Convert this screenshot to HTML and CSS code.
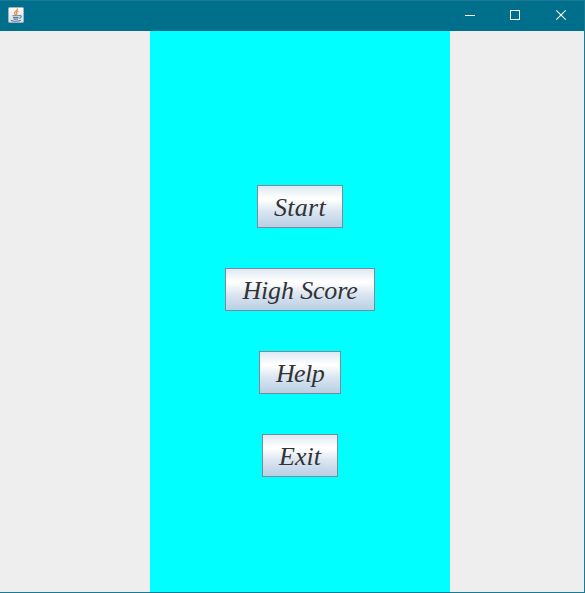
FILE: index.html
```html
<!DOCTYPE html>
<html lang="en">
<head>
<meta charset="utf-8">
<title>Menu</title>
<link rel="stylesheet" href="styles.css">
</head>
<body>
<div class="window">
  <header class="titlebar">
    <svg class="app-icon" width="16" height="16" viewBox="0 0 16 16">
      <defs><linearGradient id="tile" x2="0" y2="1"><stop stop-color="#fcfcfc"/><stop offset="1" stop-color="#d5dfe5"/></linearGradient></defs>
      <rect x=".5" y=".5" width="15" height="15" rx="1" fill="url(#tile)" stroke="#9eb4bd"/>
      <path d="M9.5 1.5C10 4 6 4.300 6.500 6.200C6.700 7 7.500 7.300 7.400 8M10.500 4.200C8.300 5 8 5.600 8.800 6.500C9.300 7.100 8.700 7.500 8.400 7.900" fill="none" stroke="#ed8a32" stroke-width="1.200"/>
      <path d="M4.500 8.700H11M5 10.600H10.500M5.500 12.200H10M11 8.700C14.300 7.800 13.700 10.800 11.300 11.400M3 13.500C5 14.500 10.500 14.500 12.800 13.300" fill="none" stroke="#557d9d" stroke-width="1.100"/>
    </svg>
    <div class="controls">
      <svg width="45" height="30" viewBox="0 0 45 30"><path d="M15 15.500H25" stroke="#fff"/></svg>
      <svg width="45" height="30" viewBox="0 0 45 30"><rect x="15.500" y="10.500" width="9" height="9" fill="none" stroke="#fff"/></svg>
      <svg width="45" height="30" viewBox="0 0 45 30"><path d="M16.300 10.300L25.700 19.700M25.700 10.300L16.300 19.700" stroke="#fff" stroke-width="1.100"/></svg>
    </div>
  </header>
  <main class="content">
    <nav class="menu">
      <button class="item start">Start</button>
      <button class="item score">High Score</button>
      <button class="item help">Help</button>
      <button class="item exit">Exit</button>
    </nav>
  </main>
</div>
</body>
</html>
```
FILE: styles.css
```css
* { box-sizing: border-box; }
body { margin: 0; overflow: hidden; }
.window {
  width: 585px;
  height: 593px;
  display: flex;
  flex-direction: column;
  background: #eee;
  border-right: 1px solid #1b7a93;
  border-bottom: 1px solid #1b7a93;
}
.titlebar {
  height: 31px;
  flex: none;
  display: flex;
  justify-content: space-between;
  align-items: flex-start;
  background: #006f8b;
  border-top: 1px solid #1b7a93;
}
.app-icon { margin: 6px 0 0 8px; }
.controls { display: flex; margin: -1px -1px 0 0; }
.controls svg { display: block; }
.content {
  flex: 1;
  padding-left: 150px;
}
.menu {
  width: 300px;
  height: 100%;
  padding-top: 154px;
  display: flex;
  flex-direction: column;
  align-items: center;
  gap: 40px;
  background: #0ff;
}
.item {
  height: 43px;
  padding: 2px 0 0;
  border: 1px solid #7a8a99;
  border-radius: 0;
  background: linear-gradient(#dde8f3 0%, #fff 30%, #fff 33%, #dce6f1 61%, #b8cfe5 100%);
  color: #333;
  font: italic 26px/30px "Liberation Serif", serif;
  white-space: nowrap;
}
.start { width: 86px; letter-spacing: 0.3px; }
.score { width: 150px; letter-spacing: -0.15px; }
.help { width: 82px; letter-spacing: -0.6px; }
.exit { width: 76px; }
```
